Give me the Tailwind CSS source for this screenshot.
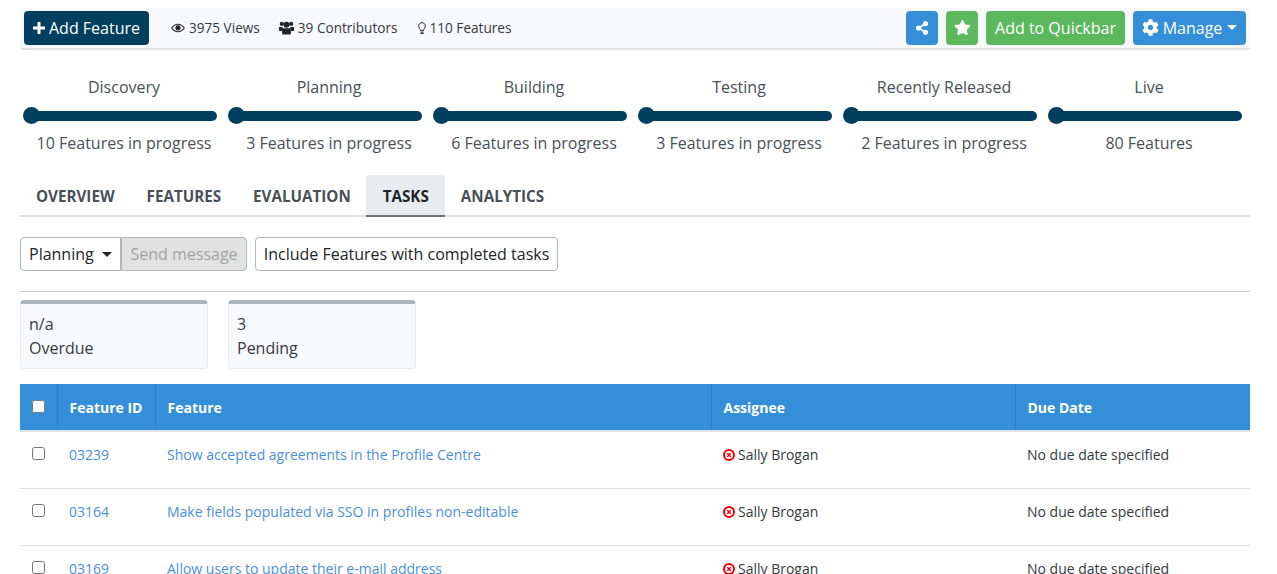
<!DOCTYPE html>
<html lang="en">
  <head>
    <meta charset="UTF-8" />
    <meta name="viewport" content="width=device-width, initial-scale=1.0" />
    <title>Tasks</title>
    <script src="https://cdn.jsdelivr.net/npm/@tailwindcss/browser@4"></script>
  </head>
  <body class="h-screen overflow-hidden bg-white pl-5 pr-[27px] pt-2 font-['Open_Sans',sans-serif] text-[#212529]">
    <!-- Toolbar -->
    <div class="flex h-[42px] items-center rounded-[3px] border-b-2 border-[#dee2e6] bg-[#f8f9fc] pl-1 pr-1 pb-[1px]">
      <button class="flex h-[34px] w-[125px] items-center justify-center gap-[4px] rounded-[4px] bg-[#003f5f] text-base text-white">
        <svg class="h-3 w-3" viewBox="0 0 12 12" fill="currentColor"><path d="M4.5 0h3v4.500H12v3H7.500V12h-3V7.500H0v-3h4.500z"/></svg>
        Add Feature
      </button>
      <div class="ml-[22px] mt-[2px] flex items-center gap-[19px] text-[13.6px] text-[#343a40]">
        <span class="flex items-center gap-[4px]">
          <svg class="h-[14px] w-[14px]" viewBox="0 0 15 14" fill="none"><path d="M.8 7C2.600 4.400 4.900 3 7.500 3s4.900 1.400 6.700 4c-1.800 2.600-4.100 4-6.700 4S2.600 9.600.8 7z" stroke="#212529" stroke-width="1.300"/><circle cx="7.500" cy="6.800" r="2.800" fill="#212529"/></svg>
          3975 Views
        </span>
        <span class="flex items-center gap-[4px]">
          <svg class="h-[14px] w-[15px]" viewBox="0 0 15 14" fill="#212529"><circle cx="2.800" cy="2.900" r="2.100"/><circle cx="12.200" cy="2.900" r="2.100"/><circle cx="7.500" cy="3.800" r="3"/><path d="M0 6h3.200c.4 0 .6.400.4 1L3 10H.8C.3 10 0 9.700 0 9.200zM15 6h-3.200c-.4 0-.6.400-.4 1l.6 3h2.200c.5 0 .8-.3.800-.8zM4.600 7.200h5.800c1 0 1.500.6 1.500 1.400V12.500c0 .7-.4 1.100-1 1.100H4.100c-.6 0-1-.4-1-1.100V8.600c0-.8.500-1.400 1.500-1.400z"/></svg>
          39 Contributors
        </span>
        <span class="ml-px flex items-center gap-[4px]">
          <svg class="h-[13px] w-2" viewBox="0 0 8 13" fill="none" stroke="#212529"><path d="M2.500 8.600C2.500 7 .7 6.200.7 3.900.7 2 2.200.7 4 .7s3.300 1.300 3.300 3.200C7.300 6.200 5.500 7 5.500 8.600z" stroke-width="1"/><path d="M2.500 10.200h3M2.500 11.500h3" stroke-width="1"/></svg>
          110 Features
        </span>
      </div>
      <div class="ml-auto flex items-center gap-2">
        <button class="flex h-[34px] w-8 items-center justify-center rounded-[4px] bg-[#348fd8] text-white">
          <svg class="h-[14px] w-[14px]" viewBox="0 0 448 512" fill="currentColor"><path d="M352 320c-22.608 0-43.387 7.819-59.79 20.895l-102.486-64.054a96.551 96.551 0 0 0 0-41.683l102.486-64.054C308.613 184.181 329.392 192 352 192c53.019 0 96-42.981 96-96S405.019 0 352 0s-96 42.981-96 96c0 7.158.79 14.13 2.276 20.841L155.790 180.895C139.387 167.819 118.608 160 96 160c-53.019 0-96 42.981-96 96s42.981 96 96 96c22.608 0 43.387-7.819 59.790-20.895l102.486 64.054A96.301 96.301 0 0 0 256 416c0 53.019 42.981 96 96 96s96-42.981 96-96-42.981-96-96-96z"/></svg>
        </button>
        <button class="flex h-[34px] w-8 items-center justify-center rounded-[4px] bg-[#5cb85c] text-white">
          <svg class="h-[15px] w-[17px]" viewBox="0 0 576 512" fill="currentColor"><path d="M259.3 17.8L194 150.2 47.9 171.5c-26.2 3.8-36.7 36.1-17.7 54.6l105.7 103-25 145.5c-4.5 26.3 23.2 46 46.4 33.7L288 439.6l130.7 68.7c23.2 12.2 50.9-7.4 46.4-33.7l-25-145.5 105.7-103c19-18.5 8.5-50.8-17.7-54.6L382 150.2 316.7 17.8c-11.7-23.6-45.6-23.9-57.4 0z"/></svg>
        </button>
        <button class="h-[34px] w-[139px] rounded-[4px] bg-[#5cb85c] text-base text-white">Add to Quickbar</button>
        <button class="flex h-[34px] w-[113px] items-center justify-center gap-[4px] rounded-[4px] bg-[#348fd8] text-base text-white">
          <svg class="h-[17px] w-[17px]" viewBox="0 0 512 512" fill="currentColor"><path d="M487.4 315.7l-42.6-24.6c4.3-23.2 4.3-47 0-70.2l42.6-24.6c4.9-2.8 7.1-8.6 5.5-14-11.1-35.6-30-67.8-54.7-94.6-3.8-4.1-10-5.1-14.8-2.3L380.8 110c-17.9-15.4-38.5-27.3-60.8-35.1V25.8c0-5.6-3.9-10.5-9.4-11.7-36.7-8.2-74.3-7.8-109.2 0-5.5 1.2-9.4 6.1-9.4 11.7V75c-22.2 7.9-42.8 19.8-60.8 35.1L88.7 85.5c-4.9-2.8-11-1.9-14.8 2.3-24.7 26.7-43.6 58.9-54.7 94.6-1.7 5.4.6 11.2 5.5 14L67.3 221c-4.3 23.2-4.3 47 0 70.2l-42.6 24.6c-4.9 2.8-7.1 8.6-5.5 14 11.1 35.6 30 67.8 54.7 94.6 3.8 4.1 10 5.1 14.8 2.3l42.6-24.6c17.9 15.4 38.5 27.3 60.8 35.1v49.2c0 5.6 3.9 10.5 9.4 11.7 36.7 8.2 74.3 7.8 109.2 0 5.5-1.2 9.4-6.1 9.4-11.7v-49.2c22.2-7.9 42.8-19.8 60.8-35.1l42.6 24.6c4.9 2.8 11 1.9 14.8-2.3 24.7-26.7 43.6-58.9 54.7-94.6 1.5-5.5-.7-11.3-5.6-14.1zM256 336c-44.1 0-80-35.9-80-80s35.9-80 80-80 80 35.9 80 80-35.9 80-80 80z"/></svg>
          Manage
          <span class="ml-[1px] h-0 w-0 border-x-[5px] border-t-[5px] border-x-transparent border-t-white"></span>
        </button>
      </div>
    </div>

    <!-- Stages -->
    <div class="mt-[25px] grid grid-cols-[repeat(6,205px)] pl-[1px] text-base text-[#495057]">
      <div class="text-center">
        <div class="h-6 pl-px leading-6">Discovery</div>
        <div class="relative mb-[7px] ml-[2px] mr-[9px] mt-[8px] h-[17px]"><div class="absolute left-[8px] right-0 top-[4px] h-[10px] rounded-full bg-[#003f5f]"></div><div class="absolute left-0 top-0 h-[17px] w-[17px] rounded-full bg-[#003f5f]"></div></div>
        <div class="h-6 pl-px leading-6">10 Features in progress</div>
      </div>
      <div class="text-center">
        <div class="h-6 pl-px leading-6">Planning</div>
        <div class="relative mb-[7px] ml-[2px] mr-[9px] mt-[8px] h-[17px]"><div class="absolute left-[8px] right-0 top-[4px] h-[10px] rounded-full bg-[#003f5f]"></div><div class="absolute left-0 top-0 h-[17px] w-[17px] rounded-full bg-[#003f5f]"></div></div>
        <div class="h-6 pl-px leading-6">3 Features in progress</div>
      </div>
      <div class="text-center">
        <div class="h-6 pl-px leading-6">Building</div>
        <div class="relative mb-[7px] ml-[2px] mr-[9px] mt-[8px] h-[17px]"><div class="absolute left-[8px] right-0 top-[4px] h-[10px] rounded-full bg-[#003f5f]"></div><div class="absolute left-0 top-0 h-[17px] w-[17px] rounded-full bg-[#003f5f]"></div></div>
        <div class="h-6 pl-px leading-6">6 Features in progress</div>
      </div>
      <div class="text-center">
        <div class="h-6 pl-px leading-6">Testing</div>
        <div class="relative mb-[7px] ml-[2px] mr-[9px] mt-[8px] h-[17px]"><div class="absolute left-[8px] right-0 top-[4px] h-[10px] rounded-full bg-[#003f5f]"></div><div class="absolute left-0 top-0 h-[17px] w-[17px] rounded-full bg-[#003f5f]"></div></div>
        <div class="h-6 pl-px leading-6">3 Features in progress</div>
      </div>
      <div class="text-center">
        <div class="h-6 pl-px leading-6">Recently Released</div>
        <div class="relative mb-[7px] ml-[2px] mr-[9px] mt-[8px] h-[17px]"><div class="absolute left-[8px] right-0 top-[4px] h-[10px] rounded-full bg-[#003f5f]"></div><div class="absolute left-0 top-0 h-[17px] w-[17px] rounded-full bg-[#003f5f]"></div></div>
        <div class="h-6 pl-px leading-6">2 Features in progress</div>
      </div>
      <div class="text-center">
        <div class="h-6 pl-px leading-6">Live</div>
        <div class="relative mb-[7px] ml-[2px] mr-[9px] mt-[8px] h-[17px]"><div class="absolute left-[8px] right-0 top-[4px] h-[10px] rounded-full bg-[#003f5f]"></div><div class="absolute left-0 top-0 h-[17px] w-[17px] rounded-full bg-[#003f5f]"></div></div>
        <div class="h-6 pl-px leading-6">80 Features</div>
      </div>
    </div>

    <!-- Tabs -->
    <div class="mt-[20px] flex h-[42px] border-b-2 border-[#dee2e6] text-[15.2px] font-bold text-[#495057] uppercase">
      <div class="flex items-center px-4 pt-[2px]">Overview</div>
      <div class="flex items-center px-4 pt-[2px]">Features</div>
      <div class="flex items-center px-4 pt-[2px]">Evaluation</div>
      <div class="-mb-[2px] -ml-px flex items-center rounded-t-[4px] border-b-2 border-[#6c757d] bg-[#e9ecef] pl-[17px] pr-4 pt-[2px] text-[#212529]">Tasks</div>
      <div class="flex items-center px-4 pt-[2px]">Analytics</div>
    </div>

    <!-- Filters -->
    <div class="mt-5 flex h-[34px] text-base">
      <button class="flex w-[101px] items-center gap-2 rounded-l-[4px] border border-[#adb5bd] bg-white pl-2">
        Planning
        <span class="h-0 w-0 border-x-[5px] border-t-[5px] border-x-transparent border-t-[#212529]"></span>
      </button>
      <button class="w-[126px] rounded-r-[4px] border border-[#adb5bd] bg-[#e2e2e2] text-[#a3a3a3]">Send message</button>
      <button class="ml-2 w-[303px] rounded-[4px] border border-[#adb5bd] bg-white">Include Features with completed tasks</button>
    </div>
    <hr class="mt-5 border-t border-[#c4c8cc]" />

    <!-- Summary cards -->
    <div class="mt-2 flex gap-5 text-base text-[#343a40]">
      <div class="h-[69px] w-[188px] rounded-[4px] border border-t-4 border-[#e6ebf5] border-t-[#adb5bd] bg-[#f8f9fc] px-2 pt-2 leading-6">
        <div>n/a</div>
        <div>Overdue</div>
      </div>
      <div class="h-[69px] w-[188px] rounded-[4px] border border-t-4 border-[#e6ebf5] border-t-[#adb5bd] bg-[#f8f9fc] px-2 pt-2 leading-6">
        <div>3</div>
        <div>Pending</div>
      </div>
    </div>

    <!-- Tasks table -->
    <table class="mt-[15px] w-full table-fixed border-collapse text-left text-sm">
      <colgroup>
        <col class="w-[37px]" />
        <col class="w-[98px]" />
        <col class="w-[556px]" />
        <col class="w-[304px]" />
        <col />
      </colgroup>
      <thead class="bg-[#348fd8] text-white">
        <tr class="h-[47px] border-b-[2px] border-[#dee2e6]">
          <th class="border-r border-[#2b80c5] pb-[2px] pl-3 font-normal"><input type="checkbox" class="block h-[13px] w-[13px]" /></th>
          <th class="border-r border-[#2b80c5] pl-3 pt-[2px] font-bold">Feature ID</th>
          <th class="border-r border-[#2b80c5] pl-3 pt-[2px] font-bold">Feature</th>
          <th class="border-r border-[#2b80c5] pl-3 pt-[2px] font-bold">Assignee</th>
          <th class="pl-3 pt-[2px] font-bold">Due Date</th>
        </tr>
      </thead>
      <tbody class="text-[#343a40]">
        <tr class="h-[57px] border-b border-[#dee2e6] align-top">
          <td class="pl-3 pt-[15px]"><input type="checkbox" class="block h-[13px] w-[13px]" /></td>
          <td class="pl-3 pt-[13px] text-[#4a90d9]">03239</td>
          <td class="pl-3 pt-[13px] text-[#4a90d9]">Show accepted agreements in the Profile Centre</td>
          <td class="pl-3 pt-[13px]">
            <span class="flex items-center gap-[3px]">
              <svg class="h-3 w-3" viewBox="0 0 12 12" fill="none"><circle cx="6" cy="6" r="5" stroke="#f00000" stroke-width="2"/><path d="M4.300 4.300l3.400 3.400M7.700 4.300L4.300 7.700" stroke="#f00000" stroke-width="1.600"/></svg>
              Sally Brogan
            </span>
          </td>
          <td class="pl-3 pt-[13px]">No due date specified</td>
        </tr>
        <tr class="h-[57px] border-b border-[#dee2e6] align-top">
          <td class="pl-3 pt-[15px]"><input type="checkbox" class="block h-[13px] w-[13px]" /></td>
          <td class="pl-3 pt-[13px] text-[#4a90d9]">03164</td>
          <td class="pl-3 pt-[13px] text-[#4a90d9]">Make fields populated via SSO in profiles non-editable</td>
          <td class="pl-3 pt-[13px]">
            <span class="flex items-center gap-[3px]">
              <svg class="h-3 w-3" viewBox="0 0 12 12" fill="none"><circle cx="6" cy="6" r="5" stroke="#f00000" stroke-width="2"/><path d="M4.300 4.300l3.400 3.400M7.700 4.300L4.300 7.700" stroke="#f00000" stroke-width="1.600"/></svg>
              Sally Brogan
            </span>
          </td>
          <td class="pl-3 pt-[13px]">No due date specified</td>
        </tr>
        <tr class="h-[57px] border-b border-[#dee2e6] align-top">
          <td class="pl-3 pt-[15px]"><input type="checkbox" class="block h-[13px] w-[13px]" /></td>
          <td class="pl-3 pt-[13px] text-[#4a90d9]">03169</td>
          <td class="pl-3 pt-[13px] text-[#4a90d9]">Allow users to update their e-mail address</td>
          <td class="pl-3 pt-[13px]">
            <span class="flex items-center gap-[3px]">
              <svg class="h-3 w-3" viewBox="0 0 12 12" fill="none"><circle cx="6" cy="6" r="5" stroke="#f00000" stroke-width="2"/><path d="M4.300 4.300l3.400 3.400M7.700 4.300L4.300 7.700" stroke="#f00000" stroke-width="1.600"/></svg>
              Sally Brogan
            </span>
          </td>
          <td class="pl-3 pt-[13px]">No due date specified</td>
        </tr>
      </tbody>
    </table>
  </body>
</html>
